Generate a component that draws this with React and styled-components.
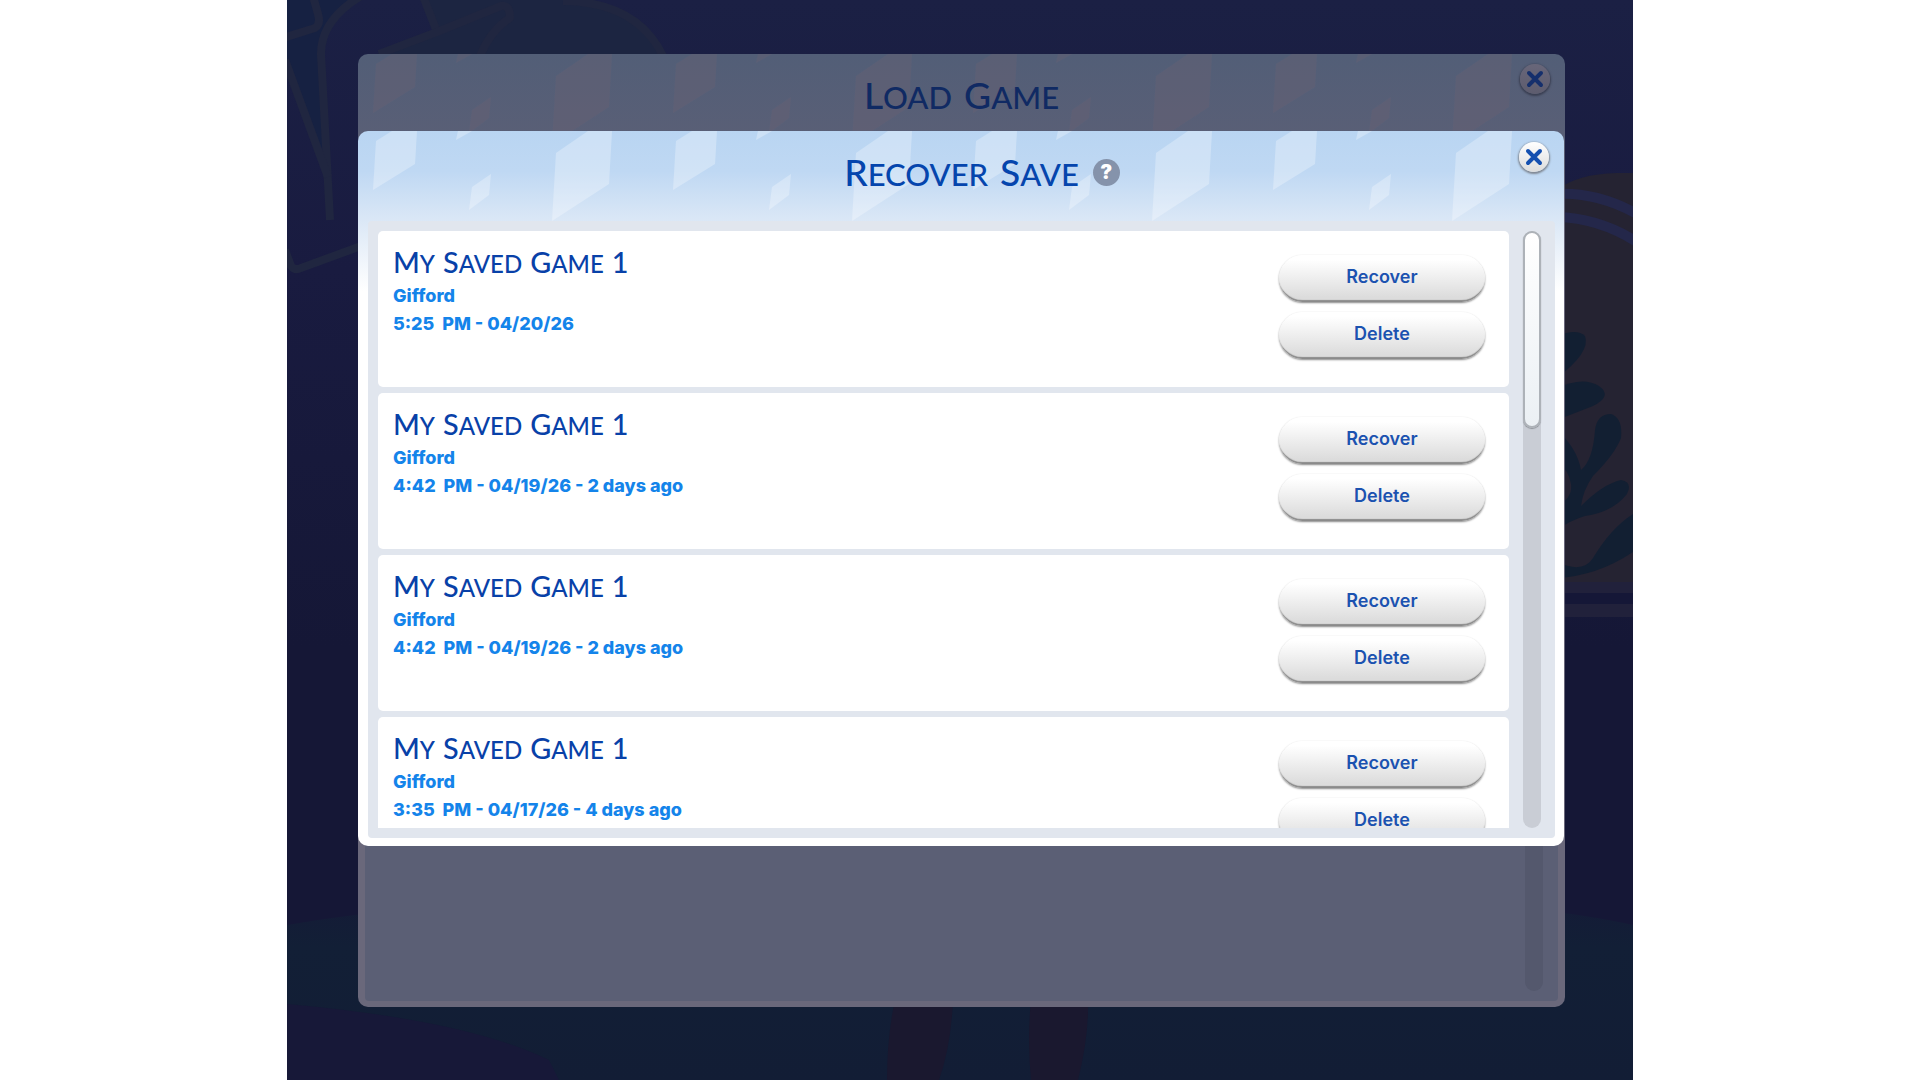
import React from "react";
import styled, { createGlobalStyle } from "styled-components";

const GlobalStyle = createGlobalStyle`
  * {
    box-sizing: border-box;
  }

  body {
    margin: 0;
    background: #fff;
    font-family: Inter, "Liberation Sans", sans-serif;
  }

  h1, h2, h3, p, ul {
    margin: 0;
    padding: 0;
  }
`;

const saves = [
  { id: 1, name: "My Saved Game 1", family: "Gifford", time: "5:25  PM - 04/20/26" },
  { id: 2, name: "My Saved Game 1", family: "Gifford", time: "4:42  PM - 04/19/26 - 2 days ago" },
  { id: 3, name: "My Saved Game 1", family: "Gifford", time: "4:42  PM - 04/19/26 - 2 days ago" },
  { id: 4, name: "My Saved Game 1", family: "Gifford", time: "3:35  PM - 04/17/26 - 4 days ago" },
];

// Scene ....
const Scene = styled.main`
  position: relative;
  display: grid;
  max-width: 1346px;
  height: 100vh;
  margin: 0 auto;
  padding: 54px 68px 73px 71px;
  overflow: hidden;
  background: #151737;
`;

const SceneArt = styled.svg`
  position: absolute;
  inset: 0;
  width: 100%;
  height: 100%;
`;

// Dialogs ....
const Dialog = styled.section`
  position: relative;
  grid-area: 1 / 1;
  display: flex;
  flex-direction: column;
  min-height: 0;
  border-radius: 10px;
  overflow: hidden;
`;

const LoadDialog = styled(Dialog)`
  background: linear-gradient(#525e77 0, #5a5f76 90px, #6a687b 168px);
  padding: 0 7px 6px;
`;

const RecoverDialog = styled(Dialog)`
  margin: 77px 1px 161px 0;
  padding: 0 9px 8px 10px;
  background: linear-gradient(#b9d5f2 0, #bfd8f3 40px, #dae7f6 88px, #fff 160px);
`;

const Pattern = styled.svg`
  position: absolute;
  top: 0;
  left: 0;
  width: 100%;
  height: 90px;
`;

const Header = styled.header`
  position: relative;
  display: grid;
  grid-template-columns: 1fr auto 1fr;
  align-items: center;
  column-gap: 14px;
  flex: none;
  height: 90px;
`;

const Title = styled.h2`
  grid-column: 2;
  display: flex;
  gap: 12px;
  padding-bottom: 6px;
  color: ${(props) => (props.$dimmed ? "#102a63" : "#0545ad")};
  font-family: Lato, "Liberation Sans", sans-serif;
  font-size: 31px;
  font-weight: 500;
  line-height: 44px;
`;

const Word = styled.span`
  display: block;
  text-transform: uppercase;

  &::first-letter {
    font-size: 1.2em;
  }
`;

const HelpButton = styled.button`
  display: grid;
  place-items: center;
  width: 27px;
  height: 27px;
  margin-bottom: 7px;
  padding: 0;
  border: 0;
  border-radius: 50%;
  background: #8593ab;
  color: #fff;
  font: 900 20px/27px Inter, sans-serif;
`;

const CloseButton = styled.button`
  position: absolute;
  top: ${(props) => (props.$dimmed ? "10px" : "11px")};
  right: ${(props) => (props.$dimmed ? "8px" : "6px")};
  display: grid;
  place-items: center;
  width: 30px;
  height: 30px;
  padding: 0;
  border: 0;
  border-radius: 50%;
  background: ${(props) =>
    props.$dimmed ? "linear-gradient(#686679, #5d5c6e)" : "linear-gradient(#fff, #dcdcdc)"};
  box-shadow: 0 1px 2px 1px ${(props) => (props.$dimmed ? "#3a3f52" : "#7f8792")};
  color: ${(props) => (props.$dimmed ? "#152f6c" : "#1550b0")};
`;

const Tray = styled.div`
  position: relative;
  display: flex;
  flex: 1;
  min-height: 0;
  gap: 14px;
  padding: 10px 14px 10px 10px;
  border-radius: 4px;
  background: #e1e6ee;
`;

const EmptyTray = styled(Tray)`
  justify-content: flex-end;
  padding: 10px 15px 10px;
  background: #5b5f75;
`;

const SaveList = styled.ul`
  display: flex;
  flex: 1;
  flex-direction: column;
  gap: 6px;
  overflow-y: auto;
  list-style: none;
  scrollbar-width: none;
`;

const ScrollTrack = styled.div`
  width: 18px;
  border-radius: 9px;
  background: ${(props) => (props.$dimmed ? "#54586d" : "#c9cdd5")};
`;

const ScrollThumb = styled.div`
  height: 33%;
  border: 2px solid #adb2b8;
  border-radius: 9px;
  background: linear-gradient(#fff, #ebf0f4);
  box-shadow: 0 1px 1px #8d9298;
`;

// Save rows ....
const SaveRow = styled.li`
  display: flex;
  flex: none;
  justify-content: space-between;
  min-height: 156px;
  padding: 13px 24px 13px 15px;
  border-radius: 5px;
  background: #fff;
`;

const SaveName = styled.h3`
  display: flex;
  gap: 8px;
  color: #0841a8;
  font-family: Lato, "Liberation Sans", sans-serif;
  font-size: 24px;
  font-weight: 500;
  line-height: 36px;
`;

const SaveInfo = styled.p`
  color: #1484ea;
  font-size: 18px;
  font-weight: 800;
  line-height: 28px;
  white-space: pre;
`;

const Actions = styled.div`
  display: flex;
  flex-direction: column;
  gap: 10px;
  padding-top: 11px;
`;

const ActionButton = styled.button`
  width: 206px;
  height: 47px;
  padding: 0 0 4px;
  border: 0;
  border-radius: 24px;
  background: linear-gradient(#fff 10%, #dcdcdc 90%);
  box-shadow: inset 0 -3px 1px -1px #8a8a8a, 0 1px 2px #8a8a8a;
  color: #1b52b0;
  font-family: inherit;
  font-size: 18px;
  font-weight: 600;
`;

const Backdrop = () => (
  <SceneArt viewBox="0 0 1346 1080" preserveAspectRatio="xMidYMid slice" aria-hidden="true">
    <defs>
      <linearGradient id="sky" x1="0" y1="0" x2="0" y2="1">
        <stop offset="0" stopColor="#1b2044" />
        <stop offset="0.25" stopColor="#191b40" />
        <stop offset="0.6" stopColor="#151736" />
        <stop offset="1" stopColor="#151736" />
      </linearGradient>
      <linearGradient id="ground" x1="0" y1="0" x2="0" y2="1">
        <stop offset="0" stopColor="#151a37" />
        <stop offset="0.3" stopColor="#121f36" />
        <stop offset="1" stopColor="#121d35" />
      </linearGradient>
    </defs>
    <rect width="1346" height="1080" fill="url(#sky)" />

    {/* sign outline in the top left corner */}
    <path d="M0 0 H70 Q34 20 32 50 L36 160 L0 65 Z" fill="#162142" />
    <path d="M70 0 H283 Q350 4 376 54 H90 L150 32 L136 0 Z" fill="#1c2541" />
    <g fill="none" stroke="#202640" strokeWidth="8" strokeLinejoin="round">
      <path d="M-4 38 L28 28 Q34 24 31 14 L26 -4" />
      <path d="M74 -4 Q34 20 34 54 L43 220" />
      <path d="M-2 60 L41 177" />
      <path d="M136 -4 L150 32" />
      <path d="M92 54 L150 32 L214 6 Q223 4 223 18 Q204 30 193 56" />
      <path d="M276 1 Q350 2 376 56" />
      <path d="M-2 250 L4 266 Q8 271 14 268 L74 246" />
    </g>

    {/* arched window and plant */}
    <path d="M1270 190 Q1290 174 1330 173 H1346 V592 H1270 Z" fill="#252332" />
    <g fill="none" stroke="#24274a" strokeWidth="10">
      <path d="M1270 194 Q1310 192 1350 214" />
      <path d="M1270 217 Q1312 218 1350 242" />
    </g>
    <g fill="#121f32">
      <path d="M1270 336 Q1290 328 1298 336 Q1304 352 1270 378 Z" />
      <path d="M1270 388 Q1296 376 1312 386 Q1326 396 1306 406 L1270 420 Z" />
      <path d="M1270 430 Q1290 448 1294 470 Q1306 460 1308 430 Q1310 414 1324 414 Q1336 418 1334 438 Q1328 454 1306 476 Q1296 490 1294 506 Q1316 484 1334 480 Q1346 482 1340 494 Q1326 512 1298 516 Q1284 520 1270 530 V506 Q1286 498 1284 484 Q1282 470 1270 462 Z" />
      <path d="M1270 562 Q1296 574 1306 558 Q1324 528 1346 514 V552 Q1310 576 1270 578 Z" />
    </g>
    <path d="M1270 582 H1346 V593 H1270 Z M1270 604 H1346 V617 H1270 Z" fill="#21213b" />
    <path d="M1270 593 H1346 V604 H1270 Z" fill="#151737" />

    {/* floor */}
    <path d="M0 925 Q200 890 673 890 Q1200 890 1346 925 V1080 H0 Z" fill="url(#ground)" />
    <path d="M0 1004 Q180 1020 262 1060 L272 1080 H0 Z" fill="#171838" />
    <g fill="#1a182f">
      <path d="M608 1000 H666 Q664 1046 652 1080 H600 Q600 1036 608 1000 Z" />
      <path d="M744 1000 H801 Q802 1036 791 1080 H744 Q740 1040 744 1000 Z" />
    </g>
  </SceneArt>
);

const HeaderPattern = ({ id, color }) => (
  <Pattern aria-hidden="true">
    <defs>
      <pattern id={id} width="300" height="90" patternUnits="userSpaceOnUse">
        <g fill={color}>
          <path d="M18 10 L34 0 H59 L57 33 L15 59 Z" />
          <path d="M100 0 H114 L98 9 Z" />
          <path d="M114 56 L133 43 L131 64 L111 79 Z" />
          <path d="M198 22 L230 0 H254 L251 53 L194 90 Z" />
        </g>
      </pattern>
    </defs>
    <rect width="100%" height="90" fill={`url(#${id})`} />
  </Pattern>
);

const SmallCaps = ({ children }) =>
  children.split(" ").map((word, index) => <Word key={index}>{word}</Word>);

const CloseIcon = () => (
  <svg width="20" height="20" viewBox="0 0 20 20" aria-hidden="true">
    <path d="M4 4 L16 16 M16 4 L4 16" stroke="currentColor" strokeWidth="4" strokeLinecap="round" />
  </svg>
);

const App = () => {
  return (
    <>
      <GlobalStyle />
      <Scene>
        <Backdrop />
        <LoadDialog aria-label="Load Game">
          <HeaderPattern id="crystals-dimmed" color="rgba(110, 96, 112, 0.3)" />
          <Header>
            <Title $dimmed>
              <SmallCaps>Load Game</SmallCaps>
            </Title>
            <CloseButton $dimmed aria-label="Close">
              <CloseIcon />
            </CloseButton>
          </Header>
          <EmptyTray>
            <ScrollTrack $dimmed />
          </EmptyTray>
        </LoadDialog>
        <RecoverDialog aria-label="Recover Save">
          <HeaderPattern id="crystals" color="rgba(255, 255, 255, 0.28)" />
          <Header>
            <Title>
              <SmallCaps>Recover Save</SmallCaps>
            </Title>
            <HelpButton aria-label="Help">?</HelpButton>
            <CloseButton aria-label="Close">
              <CloseIcon />
            </CloseButton>
          </Header>
          <Tray>
            <SaveList>
              {saves.map((save) => (
                <SaveRow key={save.id}>
                  <div>
                    <SaveName>
                      <SmallCaps>{save.name}</SmallCaps>
                    </SaveName>
                    <SaveInfo>{save.family}</SaveInfo>
                    <SaveInfo>{save.time}</SaveInfo>
                  </div>
                  <Actions>
                    <ActionButton>Recover</ActionButton>
                    <ActionButton>Delete</ActionButton>
                  </Actions>
                </SaveRow>
              ))}
            </SaveList>
            <ScrollTrack>
              <ScrollThumb />
            </ScrollTrack>
          </Tray>
        </RecoverDialog>
      </Scene>
    </>
  );
};

export default App;
